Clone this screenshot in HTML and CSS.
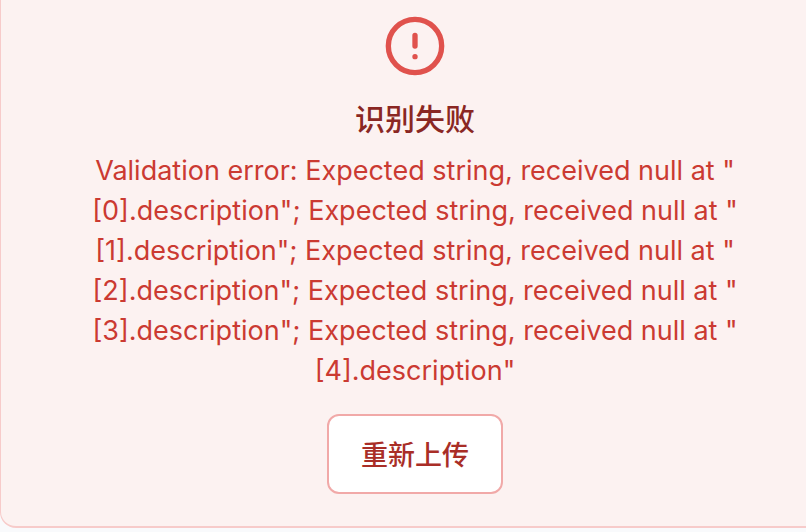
FILE: index.html
```html
<!DOCTYPE html>
<html lang="zh-CN">
<head>
<meta charset="utf-8">
<title>识别失败</title>
<link rel="stylesheet" href="styles.css">
</head>
<body>
<main class="error-panel" role="alert">
  <svg class="error-icon" viewBox="0 0 24 24" fill="none" stroke="currentColor" stroke-width="2" stroke-linecap="round" stroke-linejoin="round" aria-hidden="true">
    <circle cx="12" cy="12" r="10"/>
    <path d="M12 8v4M12 16h.01"/>
  </svg>
  <h1 class="error-title">识别失败</h1>
  <p class="error-message">Validation error: Expected string, received null at "<br>[0].description"; Expected string, received null at "<br>[1].description"; Expected string, received null at "<br>[2].description"; Expected string, received null at "<br>[3].description"; Expected string, received null at "<br>[4].description"</p>
  <button class="retry-button" type="button">重新上传</button>
</main>
</body>
</html>
```

FILE: styles.css
```css
* {
  box-sizing: border-box;
}

body {
  margin: 0;
  background: #f9fafc;
  font-family: Inter, "Noto Sans CJK SC", sans-serif;
}

.error-panel {
  display: flex;
  flex-direction: column;
  align-items: center;
  padding: 14px 0 32px 23px;
  border: 0 solid #f7cbca;
  border-bottom-width: 2px;
  border-left-width: 1px;
  border-radius: 0 0 0 16px;
  background: #fcf2f1;
}

.error-icon {
  width: 64px;
  height: 64px;
  color: #e0524d;
}

.error-title {
  margin: 20px 0 11px;
  color: #8a2723;
  font-size: 30px;
  font-weight: 500;
  line-height: 42px;
}

.error-message {
  margin: 0 0 23px;
  color: #cb3a32;
  font-size: 27px;
  line-height: 40px;
  text-align: center;
}

.retry-button {
  height: 80px;
  padding: 0 32px 2px;
  border: 2px solid #f1a9a8;
  border-radius: 12px;
  background: #fff;
  color: #a92e27;
  font: inherit;
  font-size: 27px;
  font-weight: 500;
}
```
